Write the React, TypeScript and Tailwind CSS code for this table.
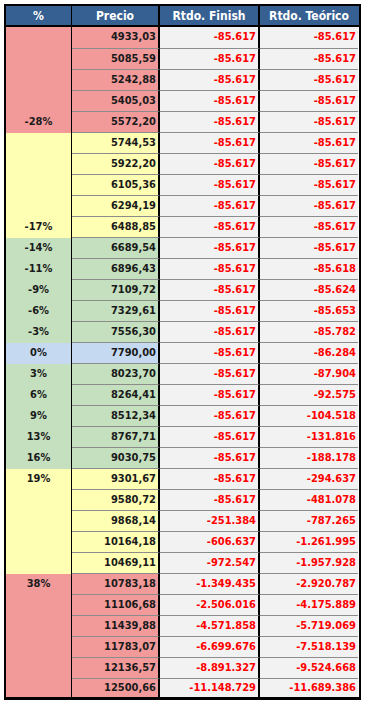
const PINK = "bg-[#f29a9a]";
const YELLOW = "bg-[#ffffb3]";
const GREEN = "bg-[#c4e0be]";
const BLUE = "bg-[#c5d9f1]";

type Row = { pct: string; price: string; finish: string; teorico: string; bg: string };

const rows: Row[] = [
  { pct: "", price: "4933,03", finish: "-85.617", teorico: "-85.617", bg: PINK },
  { pct: "", price: "5085,59", finish: "-85.617", teorico: "-85.617", bg: PINK },
  { pct: "", price: "5242,88", finish: "-85.617", teorico: "-85.617", bg: PINK },
  { pct: "", price: "5405,03", finish: "-85.617", teorico: "-85.617", bg: PINK },
  { pct: "-28%", price: "5572,20", finish: "-85.617", teorico: "-85.617", bg: PINK },
  { pct: "", price: "5744,53", finish: "-85.617", teorico: "-85.617", bg: YELLOW },
  { pct: "", price: "5922,20", finish: "-85.617", teorico: "-85.617", bg: YELLOW },
  { pct: "", price: "6105,36", finish: "-85.617", teorico: "-85.617", bg: YELLOW },
  { pct: "", price: "6294,19", finish: "-85.617", teorico: "-85.617", bg: YELLOW },
  { pct: "-17%", price: "6488,85", finish: "-85.617", teorico: "-85.617", bg: YELLOW },
  { pct: "-14%", price: "6689,54", finish: "-85.617", teorico: "-85.617", bg: GREEN },
  { pct: "-11%", price: "6896,43", finish: "-85.617", teorico: "-85.618", bg: GREEN },
  { pct: "-9%", price: "7109,72", finish: "-85.617", teorico: "-85.624", bg: GREEN },
  { pct: "-6%", price: "7329,61", finish: "-85.617", teorico: "-85.653", bg: GREEN },
  { pct: "-3%", price: "7556,30", finish: "-85.617", teorico: "-85.782", bg: GREEN },
  { pct: "0%", price: "7790,00", finish: "-85.617", teorico: "-86.284", bg: BLUE },
  { pct: "3%", price: "8023,70", finish: "-85.617", teorico: "-87.904", bg: GREEN },
  { pct: "6%", price: "8264,41", finish: "-85.617", teorico: "-92.575", bg: GREEN },
  { pct: "9%", price: "8512,34", finish: "-85.617", teorico: "-104.518", bg: GREEN },
  { pct: "13%", price: "8767,71", finish: "-85.617", teorico: "-131.816", bg: GREEN },
  { pct: "16%", price: "9030,75", finish: "-85.617", teorico: "-188.178", bg: GREEN },
  { pct: "19%", price: "9301,67", finish: "-85.617", teorico: "-294.637", bg: YELLOW },
  { pct: "", price: "9580,72", finish: "-85.617", teorico: "-481.078", bg: YELLOW },
  { pct: "", price: "9868,14", finish: "-251.384", teorico: "-787.265", bg: YELLOW },
  { pct: "", price: "10164,18", finish: "-606.637", teorico: "-1.261.995", bg: YELLOW },
  { pct: "", price: "10469,11", finish: "-972.547", teorico: "-1.957.928", bg: YELLOW },
  { pct: "38%", price: "10783,18", finish: "-1.349.435", teorico: "-2.920.787", bg: PINK },
  { pct: "", price: "11106,68", finish: "-2.506.016", teorico: "-4.175.889", bg: PINK },
  { pct: "", price: "11439,88", finish: "-4.571.858", teorico: "-5.719.069", bg: PINK },
  { pct: "", price: "11783,07", finish: "-6.699.676", teorico: "-7.518.139", bg: PINK },
  { pct: "", price: "12136,57", finish: "-8.891.327", teorico: "-9.524.668", bg: PINK },
  { pct: "", price: "12500,66", finish: "-11.148.729", teorico: "-11.689.386", bg: PINK },
];

export default function App() {
  return (
    <div className="bg-white min-h-screen p-1 font-['DejaVu_Sans_Condensed','DejaVu_Sans',sans-serif] font-bold text-[11px]">
      <div className="w-[357px] border-2 border-black border-b-[3px]">
        {/* Header */}
        <div className="flex h-[21px] border-b-2 border-black bg-[#366092] text-white text-[12px]">
          <div className="w-[66px] flex items-center justify-center border-r border-black">%</div>
          <div className="w-[88px] flex items-center justify-center border-r-2 border-black">Precio</div>
          <div className="w-[100px] flex items-center justify-center border-r-2 border-black">Rtdo. Finish</div>
          <div className="w-[98px] flex items-center justify-center">Rtdo. Teórico</div>
        </div>

        {rows.map((r, i) => {
          const first = i === 0;
          const last = i === rows.length - 1;
          const h = first ? "h-[22px]" : last ? "h-[18px]" : "h-[21px]";
          const line = last ? "" : "border-b border-[#8c8c8c]";
          return (
            <div key={i} className={`flex ${h}`}>
              <div className={`w-[66px] flex items-center justify-center border-r border-black text-[#1a1a1a] ${r.bg}`}>
                {r.pct}
              </div>
              <div className={`w-[88px] flex items-center justify-end pr-[2px] border-r-2 border-r-black text-[#1a1a1a] ${r.bg} ${line}`}>
                {r.price}
              </div>
              <div className={`w-[100px] flex items-center justify-end pr-[2px] border-r-2 border-r-black bg-[#f2f2f2] text-[#ff0000] ${line}`}>
                {r.finish}
              </div>
              <div className={`w-[98px] flex items-center justify-end pr-[2px] bg-[#f2f2f2] text-[#ff0000] ${line}`}>
                {r.teorico}
              </div>
            </div>
          );
        })}
      </div>
    </div>
  );
}
